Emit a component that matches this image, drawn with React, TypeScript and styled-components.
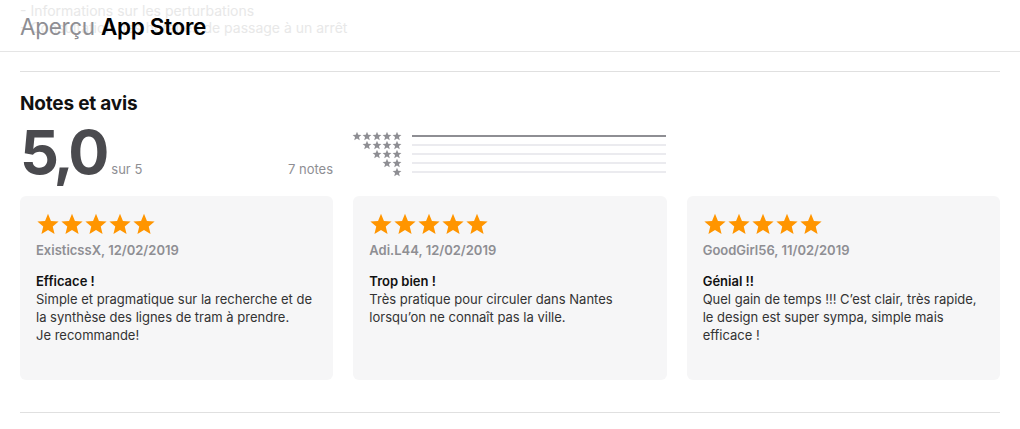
import React from "react";
import styled, { createGlobalStyle } from "styled-components";

const Global = createGlobalStyle`
  html, body { margin: 0; padding: 0; background: #fff; }
  body { font-family: Inter, "Open Sans", "Liberation Sans", sans-serif; color: #1d1d1f; -webkit-font-smoothing: antialiased; }
`;

const Page = styled.div`
  width: 1020px;
  height: 429px;
  overflow: hidden;
  background: #fff;
`;

const Header = styled.header`
  position: relative;
  height: 52px;
  border-bottom: 1px solid #e5e5e5;
  box-sizing: border-box;
  padding: 14px 20px 0;
`;

const Underlay = styled.div`
  position: absolute;
  left: 20px;
  top: 2px;
  font-size: 14px;
  line-height: 17px;
  color: #e8e8e8;
  white-space: nowrap;
`;

const HeaderTitle = styled.h1`
  position: relative;
  margin: 0;
  font-size: 22.5px;
  line-height: 26px;
  font-weight: 400;
  letter-spacing: -0.3px;
  color: #8e8e93;
  span { color: #000; font-weight: 600; }
`;

const Section = styled.section`
  margin: 19px 20px 0;
  border-top: 1px solid #e0e0e0;
  padding-top: 20px;
`;

const SectionTitle = styled.h2`
  margin: 0;
  font-size: 19px;
  line-height: 24px;
  font-weight: 700;
  letter-spacing: -0.2px;
  color: #111;
`;

const Summary = styled.div`
  display: flex;
  align-items: flex-start;
  gap: 19px;
  margin-top: 6px;
  height: 62px;
`;

const Score = styled.div`
  width: 313px;
  display: flex;
  align-items: baseline;
`;

const Big = styled.span`
  font-size: 61px;
  line-height: 60px;
  font-weight: 700;
  letter-spacing: -4px;
  color: #4a4a4e;
`;

const Small = styled.span<{ $grow?: boolean }>`
  font-size: 13px;
  color: #8e8e93;
  margin-left: ${(p) => (p.$grow ? "auto" : "6px")};
`;

const Histogram = styled.div`
  display: flex;
  flex-direction: column;
  gap: 1px;
  padding-top: 10px;
`;

const HistRow = styled.div`
  display: flex;
  align-items: center;
  height: 8px;
  gap: 10px;
`;

const MiniStars = styled.div`
  width: 50px;
  display: flex;
  justify-content: flex-end;
`;

const Bar = styled.div<{ $fill: number }>`
  width: 254px;
  height: 2px;
  background: #ebebef;
  position: relative;
  &::after {
    content: "";
    position: absolute;
    left: 0;
    top: 0;
    bottom: 0;
    width: ${(p) => p.$fill * 100}%;
    background: #8e8e93;
  }
`;

const Cards = styled.div`
  display: grid;
  grid-template-columns: repeat(3, 1fr);
  gap: 20px;
  margin: 0 20px;
  padding-top: 12px;
`;

const Card = styled.div`
  background: #f6f6f7;
  border-radius: 6px;
  height: 184px;
  box-sizing: border-box;
  padding: 16px 16px;
`;

const StarRow = styled.div`
  display: flex;
  height: 24px;
`;

const Author = styled.div`
  margin-top: 5px;
  font-size: 13px;
  line-height: 18px;
  font-weight: 600;
  color: #8e8e93;
`;

const ReviewTitle = styled.div`
  margin-top: 13px;
  font-size: 13px;
  line-height: 18px;
  font-weight: 600;
  color: #111;
`;

const Body = styled.p`
  margin: 0;
  font-size: 13px;
  line-height: 18px;
  color: #333;
`;

const Divider = styled.hr`
  margin: 32px 20px 0;
  border: 0;
  border-top: 1px solid #e0e0e0;
`;

const StarPath = "M12 1.8l2.95 7.1 7.65.6-5.85 5 1.8 7.5L12 18l-6.55 4 1.8-7.5-5.85-5 7.65-.6z";

const Star = ({ size, color }: { size: number; color: string }) => (
  <svg width={size} height={size} viewBox="0 0 24 24">
    <path d={StarPath} fill={color} />
  </svg>
);

const reviews = [
  {
    author: "ExisticssX, 12/02/2019",
    title: "Efficace !",
    body: ["Simple et pragmatique sur la recherche et de", "la synthèse des lignes de tram à prendre.", "Je recommande!"],
  },
  {
    author: "Adi.L44, 12/02/2019",
    title: "Trop bien !",
    body: ["Très pratique pour circuler dans Nantes", "lorsqu’on ne connaît pas la ville."],
  },
  {
    author: "GoodGirl56, 11/02/2019",
    title: "Génial !!",
    body: ["Quel gain de temps !!! C’est clair, très rapide,", "le design est super sympa, simple mais", "efficace !"],
  },
];

const dist = [1, 0, 0, 0, 0];

export default function App() {
  return (
    <Page>
      <Global />
      <Header>
        <Underlay>
          - Informations sur les perturbations
          <br />- Consultation des horaires de passage à un arrêt
        </Underlay>
        <HeaderTitle>
          Aperçu <span>App Store</span>
        </HeaderTitle>
      </Header>
      <Section>
        <SectionTitle>Notes et avis</SectionTitle>
        <Summary>
          <Score>
            <Big>5,0</Big>
            <Small>sur 5</Small>
            <Small $grow>7 notes</Small>
          </Score>
          <Histogram>
            {dist.map((f, i) => (
              <HistRow key={i}>
                <MiniStars>
                  {Array.from({ length: 5 - i }).map((_, j) => (
                    <Star key={j} size={10} color="#8e8e93" />
                  ))}
                </MiniStars>
                <Bar $fill={f} />
              </HistRow>
            ))}
          </Histogram>
        </Summary>
      </Section>
      <Cards>
        {reviews.map((r) => (
          <Card key={r.author}>
            <StarRow>
              {Array.from({ length: 5 }).map((_, j) => (
                <Star key={j} size={24} color="#ff9500" />
              ))}
            </StarRow>
            <Author>{r.author}</Author>
            <ReviewTitle>{r.title}</ReviewTitle>
            <Body>
              {r.body.map((l, k) => (
                <React.Fragment key={k}>
                  {l}
                  {k < r.body.length - 1 && <br />}
                </React.Fragment>
              ))}
            </Body>
          </Card>
        ))}
      </Cards>
      <Divider />
    </Page>
  );
}
